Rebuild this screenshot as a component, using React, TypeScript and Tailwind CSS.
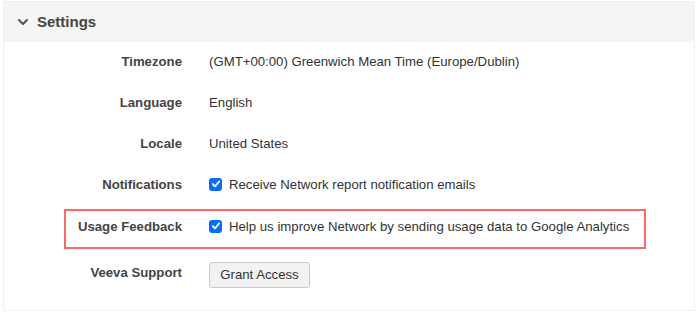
import React from "react";

const Check = () => (
  <span className="inline-flex h-[13px] w-[13px] items-center justify-center rounded-[3px] bg-[#0a6cf0]">
    <svg width="10" height="10" viewBox="0 0 10 10" fill="none">
      <path d="M1.8 5.2 L4 7.4 L8.2 2.4" stroke="white" strokeWidth="1.8" strokeLinecap="round" strokeLinejoin="round" />
    </svg>
  </span>
);

function Row({ label, children, cls = "h-[41px]", labelCls = "" }: { label: string; children: React.ReactNode; cls?: string; labelCls?: string }) {
  return (
    <div className={`flex items-center ${cls}`}>
      <div className={`w-[178px] text-right text-[13.2px] font-bold text-[#444] ${labelCls}`}>{label}</div>
      <div className="ml-[27px] flex items-center text-[13.2px] text-[#333]">{children}</div>
    </div>
  );
}

export default function App() {
  return (
    <div className="h-[315px] w-[699px] bg-white pl-[3px] pt-[1px]" style={{ fontFamily: '"Liberation Sans", Arial, sans-serif' }}>
      <div className="w-[692px] border border-[#f0f0f0] pb-[10px]">
        <div className="flex h-[40px] items-center bg-[#f5f5f5] pl-[13px]">
          <svg width="12" height="12" viewBox="0 0 12 12" fill="none" className="mr-[8px]">
            <path d="M2 4 L6 8 L10 4" stroke="#555" strokeWidth="2" strokeLinecap="round" strokeLinejoin="round" />
          </svg>
          <span className="text-[15px] font-bold text-[#444]">Settings</span>
        </div>
        <Row label="Timezone" cls="h-[41px] -mt-[1px]">(GMT+00:00) Greenwich Mean Time (Europe/Dublin)</Row>
        <Row label="Language">English</Row>
        <Row label="Locale">United States</Row>
        <Row label="Notifications">
          <Check />
          <span className="ml-[7px]">Receive Network report notification emails</span>
        </Row>
        <div className="relative mt-[1px]">
          <Row label="Usage Feedback">
            <Check />
            <span className="ml-[7px]">Help us improve Network by sending usage data to Google Analytics</span>
          </Row>
          <div className="pointer-events-none absolute left-[60px] top-[3px] h-[40px] w-[582px] border-2 border-[#f76a63]" />
        </div>
        <Row label="Veeva Support" cls="h-[50px] mt-[3px]" labelCls="-mt-[4px]">
          <button className="h-[26px] w-[101px] rounded-[3px] border border-[#c9c9c9] bg-[#f2f2f2] text-[13.2px] text-[#333]">
            Grant Access
          </button>
        </Row>
      </div>
    </div>
  );
}
